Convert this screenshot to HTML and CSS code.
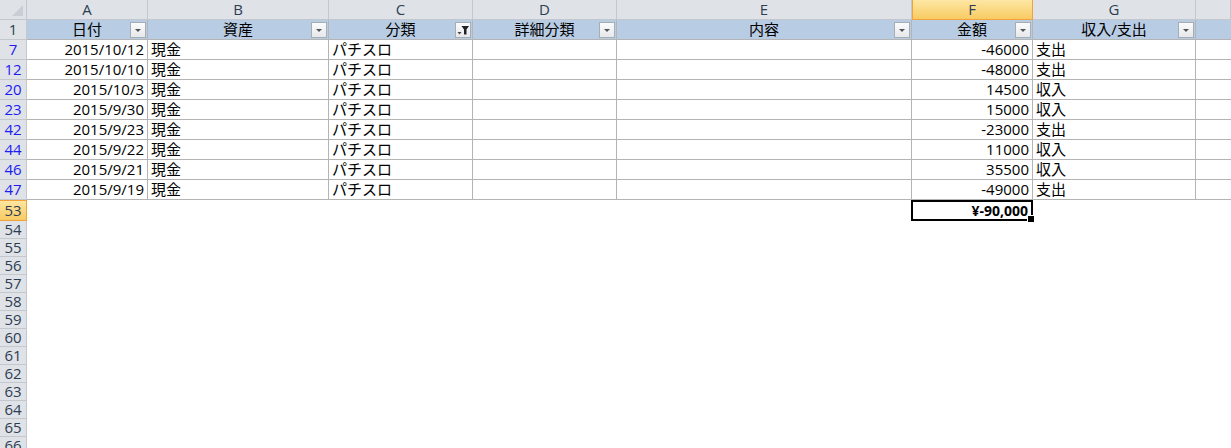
FILE: index.html
```html
<!DOCTYPE html>
<html lang="ja">
<head>
  <meta charset="UTF-8">
  <title>家計簿 - Excel</title>
  <link rel="stylesheet" href="styles.css">
</head>
<body>
  <div class="sheet">

    <!-- column letters -->
    <div class="row colheads">
      <div class="corner"><span class="corner-tri"></span></div>
      <div class="ch">A</div>
      <div class="ch">B</div>
      <div class="ch">C</div>
      <div class="ch">D</div>
      <div class="ch">E</div>
      <div class="ch active">F</div>
      <div class="ch">G</div>
      <div class="ch"></div>
    </div>

    <!-- table header (row 1) -->
    <div class="row thead">
      <div class="rh">1</div>
      <div class="c th">日付<span class="fbtn"><svg width="14" height="14" viewBox="0 0 14 14"><polygon points="4,6 10,6 7,9" fill="#555"/></svg></span></div>
      <div class="c th">資産<span class="fbtn"><svg width="14" height="14" viewBox="0 0 14 14"><polygon points="4,6 10,6 7,9" fill="#555"/></svg></span></div>
      <div class="c th">分類<span class="fbtn"><svg width="14" height="14" viewBox="0 0 14 14"><polygon points="5.5,3 13,3 10.5,6.5 10.5,11.5 8,11.5 8,6.5" fill="#222"/><polygon points="1.5,9 5.5,9 3.5,11.5" fill="#444"/></svg></span></div>
      <div class="c th">詳細分類<span class="fbtn"><svg width="14" height="14" viewBox="0 0 14 14"><polygon points="4,6 10,6 7,9" fill="#555"/></svg></span></div>
      <div class="c th">内容<span class="fbtn"><svg width="14" height="14" viewBox="0 0 14 14"><polygon points="4,6 10,6 7,9" fill="#555"/></svg></span></div>
      <div class="c th">金額<span class="fbtn"><svg width="14" height="14" viewBox="0 0 14 14"><polygon points="4,6 10,6 7,9" fill="#555"/></svg></span></div>
      <div class="c th">収入/支出<span class="fbtn"><svg width="14" height="14" viewBox="0 0 14 14"><polygon points="4,6 10,6 7,9" fill="#555"/></svg></span></div>
      <div class="c th"></div>
    </div>

    <!-- filtered data rows -->
    <div class="row data">
      <div class="rh filtered">7</div>
      <div class="c num">2015/10/12</div><div class="c">現金</div><div class="c">パチスロ</div><div class="c"></div><div class="c"></div>
      <div class="c num">-46000</div><div class="c">支出</div><div class="c"></div>
    </div>
    <div class="row data">
      <div class="rh filtered">12</div>
      <div class="c num">2015/10/10</div><div class="c">現金</div><div class="c">パチスロ</div><div class="c"></div><div class="c"></div>
      <div class="c num">-48000</div><div class="c">支出</div><div class="c"></div>
    </div>
    <div class="row data">
      <div class="rh filtered">20</div>
      <div class="c num">2015/10/3</div><div class="c">現金</div><div class="c">パチスロ</div><div class="c"></div><div class="c"></div>
      <div class="c num">14500</div><div class="c">収入</div><div class="c"></div>
    </div>
    <div class="row data">
      <div class="rh filtered">23</div>
      <div class="c num">2015/9/30</div><div class="c">現金</div><div class="c">パチスロ</div><div class="c"></div><div class="c"></div>
      <div class="c num">15000</div><div class="c">収入</div><div class="c"></div>
    </div>
    <div class="row data">
      <div class="rh filtered">42</div>
      <div class="c num">2015/9/23</div><div class="c">現金</div><div class="c">パチスロ</div><div class="c"></div><div class="c"></div>
      <div class="c num">-23000</div><div class="c">支出</div><div class="c"></div>
    </div>
    <div class="row data">
      <div class="rh filtered">44</div>
      <div class="c num">2015/9/22</div><div class="c">現金</div><div class="c">パチスロ</div><div class="c"></div><div class="c"></div>
      <div class="c num">11000</div><div class="c">収入</div><div class="c"></div>
    </div>
    <div class="row data">
      <div class="rh filtered">46</div>
      <div class="c num">2015/9/21</div><div class="c">現金</div><div class="c">パチスロ</div><div class="c"></div><div class="c"></div>
      <div class="c num">35500</div><div class="c">収入</div><div class="c"></div>
    </div>
    <div class="row data">
      <div class="rh filtered">47</div>
      <div class="c num">2015/9/19</div><div class="c">現金</div><div class="c">パチスロ</div><div class="c"></div><div class="c"></div>
      <div class="c num">-49000</div><div class="c">支出</div><div class="c"></div>
    </div>

    <!-- total row -->
    <div class="row total">
      <div class="rh active">53</div>
      <div class="e"></div><div class="e"></div><div class="e"></div><div class="e"></div><div class="e"></div>
      <div class="e num sel">¥-90,000</div>
      <div class="e"></div><div class="e"></div>
    </div>

    <!-- empty rows -->
    <div class="row blank"><div class="rh">54</div></div>
    <div class="row blank"><div class="rh">55</div></div>
    <div class="row blank"><div class="rh">56</div></div>
    <div class="row blank"><div class="rh">57</div></div>
    <div class="row blank"><div class="rh">58</div></div>
    <div class="row blank"><div class="rh">59</div></div>
    <div class="row blank"><div class="rh">60</div></div>
    <div class="row blank"><div class="rh">61</div></div>
    <div class="row blank"><div class="rh">62</div></div>
    <div class="row blank"><div class="rh">63</div></div>
    <div class="row blank"><div class="rh">64</div></div>
    <div class="row blank"><div class="rh">65</div></div>
    <div class="row blank"><div class="rh">66</div></div>
  </div>
</body>
</html>
```

FILE: styles.css
```css
:root {
  --cols: 27px 121px 181px 144px 144px 295px 121px 163px 1fr;
  --head-bg: #dfe3e8;
  --head-line: #c3c8cf;
  --head-text: #2e3d52;
  --grid-line: #b4b4b4;
  --table-head: #b8cce4;
  --active-top: #fde7a4;
  --active-bottom: #f8cb62;
  --active-line: #f0a33c;
  --filtered: #1c1cf0;
  --font: "Open Sans", "Noto Sans CJK JP", sans-serif;
}

* {
  box-sizing: border-box;
}

body {
  margin: 0;
  background: #fff;
  font-family: var(--font);
  font-size: 15px;
  color: #000;
  overflow: hidden;
}

.sheet {
  width: 1231px;
}

.row {
  display: grid;
  grid-template-columns: var(--cols);
}

/* column letters */
.colheads {
  height: 20px;
}

.corner {
  position: relative;
  background: var(--head-bg);
  border-right: 1px solid var(--head-line);
  border-bottom: 1px solid var(--head-line);
}

.corner-tri {
  position: absolute;
  right: 3px;
  bottom: 3px;
  width: 0;
  height: 0;
  border-left: 11px solid transparent;
  border-bottom: 11px solid #c9ced5;
}

.ch {
  background: var(--head-bg);
  border-right: 1px solid var(--head-line);
  border-bottom: 1px solid var(--head-line);
  color: var(--head-text);
  text-align: center;
  font-size: 15px;
  line-height: 19px;
}

.ch.active {
  background: linear-gradient(var(--active-top), var(--active-bottom));
  border-right-color: var(--active-line);
  border-bottom: 1px solid var(--active-line);
  box-shadow: inset 1px 0 0 var(--active-line);
}

/* row numbers */
.rh {
  background: var(--head-bg);
  border-right: 1px solid var(--head-line);
  border-bottom: 1px solid var(--head-line);
  color: var(--head-text);
  text-align: center;
  font-size: 15px;
}

.rh.filtered {
  color: var(--filtered);
}

.rh.active {
  background: linear-gradient(var(--active-top), var(--active-bottom));
  border-right-color: var(--active-line);
  border-bottom-color: var(--active-line);
  box-shadow: inset 0 1px 0 var(--active-line);
}

/* table header */
.thead {
  height: 20px;
}

.thead .rh {
  line-height: 19px;
}

.c {
  border-right: 1px solid var(--grid-line);
  border-bottom: 1px solid var(--grid-line);
  padding: 0 3px;
  white-space: nowrap;
  overflow: hidden;
}

.th {
  position: relative;
  background: var(--table-head);
  text-align: center;
  line-height: 19px;
  overflow: visible;
}

.thead .c:last-child {
  border-right: none;
}

.fbtn {
  position: absolute;
  right: 1px;
  top: 2px;
  width: 16px;
  height: 16px;
  border: 1px solid #a7adb5;
  background: linear-gradient(#fbfbfc, #e6e8eb);
  display: flex;
  align-items: center;
  justify-content: center;
}

/* data */
.data {
  height: 20px;
}

.data .rh,
.data .c {
  line-height: 19px;
}

.data .c:last-child {
  border-right: none;
}

.num {
  text-align: right;
}

/* total */
.total {
  height: 21px;
}

.total .rh {
  line-height: 20px;
}

.e {
  line-height: 21px;
  padding: 0 3px;
}

.sel {
  position: relative;
  font-weight: 700;
  font-size: 14px;
  margin-left: -1px;
  border: 2px solid #000;
  line-height: 17px;
}

.sel::after {
  content: "";
  position: absolute;
  right: -4px;
  bottom: -4px;
  width: 6px;
  height: 6px;
  background: #000;
  border: 1px solid #fff;
}

/* empty rows */
.blank {
  height: 18px;
}

.blank .rh {
  line-height: 17px;
}
```
